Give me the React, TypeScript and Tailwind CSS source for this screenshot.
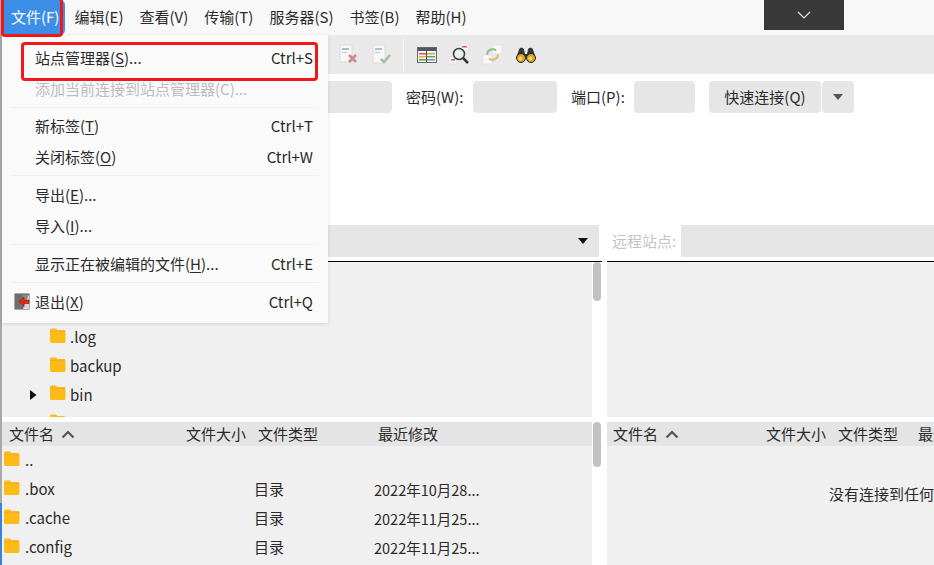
import React from "react";

const font = { fontFamily: '"Noto Sans CJK SC", "Noto Sans", sans-serif' };

const topMenus = ["编辑(E)", "查看(V)", "传输(T)", "服务器(S)", "书签(B)", "帮助(H)"];

const Folder = ({ className = "" }: { className?: string }) => (
  <svg width="16" height="16" viewBox="0 0 16 16" className={`shrink-0 ${className}`}>
    <path d="M0 2C0 1 .7.500 1.500.500h4.600l1.400 1.500h6.500c.9 0 1.500.6 1.500 1.500v10c0 .9-.6 1.500-1.500 1.500h-12C.7 15 0 14.400 0 13.500z" fill="#fdbb18" />
    <path d="M0 3h15v.6H0z" fill="#e2a73a" />
  </svg>
);

const ChevronUp = () => (
  <svg width="14" height="9" viewBox="0 0 14 9">
    <path d="M1.500 7.500L7 2l5.500 5.500" fill="none" stroke="#555" strokeWidth="2.200" />
  </svg>
);

const Caret = ({ color = "#111" }: { color?: string }) => (
  <svg width="10" height="6" viewBox="0 0 10 6">
    <path d="M0 0h10L5 6z" fill={color} />
  </svg>
);

const MenuItem = ({
  label,
  mnemonic,
  after,
  shortcut,
  disabled,
  icon,
}: {
  label: string;
  mnemonic?: string;
  after?: string;
  shortcut?: string;
  disabled?: boolean;
  icon?: React.ReactNode;
}) => (
  <div className={`relative flex h-[31px] items-center justify-between pl-[33px] pr-[15px] text-[15px] ${disabled ? "text-[#bdbdbd]" : "text-[#2a2a2a]"}`}>
    {icon}
    <span>
      {label}
      {mnemonic && <u className="underline-offset-2">{mnemonic}</u>}
      {after}
    </span>
    {shortcut && <span>{shortcut}</span>}
  </div>
);

const MenuSep = ({ short }: { short?: boolean }) => (
  <div className={`px-[9px] pt-[2px] ${short ? "h-[6px]" : "h-[7px]"}`}>
    <div className="h-px w-full bg-[#efefef]" />
  </div>
);

const ExitIcon = () => (
  <svg width="17" height="17" viewBox="0 0 17 17" className="absolute left-[12px] top-[6px]">
    <rect x="1" y="1" width="14" height="15" fill="#8a8a8a" stroke="#555" />
    <path d="M1 1h8v15H1z" fill="#6f6f6f" />
    <path d="M15 1v15H9z" fill="#d8d8d8" />
    <path d="M5 8.500L10 4v3h5v3.500h-5v3z" fill="#e02a12" stroke="#9c1a08" strokeWidth=".6" />
  </svg>
);

const DocX = () => (
  <svg width="22" height="22" viewBox="0 0 22 22">
    <path d="M2 1h12v17H2z" fill="#f7f7f7" stroke="#dcdcdc" />
    <path d="M4 4h7v2H4z" fill="#a9bfd4" />
    <path d="M4 8h5v1H4z" fill="#c9c9c9" />
    <path d="M11 11l7 7m0-7l-7 7" stroke="#c98a8a" strokeWidth="2.500" />
  </svg>
);

const DocCheck = () => (
  <svg width="22" height="22" viewBox="0 0 22 22">
    <path d="M2 1h12v18H2z" fill="#f7f7f7" stroke="#dcdcdc" />
    <path d="M4 4h7v2H4z" fill="#a9bfd4" />
    <path d="M4 8h5v1H4z" fill="#c9c9c9" />
    <path d="M10 15l3 3 6-7" fill="none" stroke="#9cc29c" strokeWidth="2.500" />
  </svg>
);

const TableIcon = () => (
  <svg width="20" height="16" viewBox="0 0 20 16">
    <rect x=".5" y=".5" width="19" height="15" fill="#f6f6f6" stroke="#666" />
    <path d="M1 1h18v3H1z" fill="#4d5a66" />
    <path d="M2 6h7v1.500H2z" fill="#d9534a" />
    <path d="M2 9h7v1.500H2z" fill="#e3b23c" />
    <path d="M2 12h7v1.500H2z" fill="#4da64d" />
    <path d="M10 6h8v1.500h-8z" fill="#e3a03c" />
    <path d="M10 9h8v1.500h-8z" fill="#5aa85a" />
    <path d="M10 12h8v1.500h-8z" fill="#6a8fc0" />
    <path d="M9.500 4v11" stroke="#555" />
  </svg>
);

const SearchIcon = () => (
  <svg width="21" height="21" viewBox="0 0 21 21">
    <path d="M11 0h9v7h-9z" fill="#fafafa" stroke="#ddd" />
    <path d="M13 2h5v1.500h-5z" fill="#d9534a" />
    <path d="M0 13h8v7H0z" fill="#fafafa" stroke="#ddd" />
    <path d="M2 15h4v1.500H2z" fill="#d9534a" />
    <circle cx="10" cy="10" r="5.500" fill="#eef3f5" fillOpacity=".5" stroke="#3a3a3a" strokeWidth="1.500" />
    <path d="M14 14l5 5" stroke="#333" strokeWidth="2.500" />
  </svg>
);

const SyncIcon = () => (
  <svg width="21" height="21" viewBox="0 0 21 21">
    <path d="M10 1h10v9H10z" fill="#f8f8f8" stroke="#e2e2e2" />
    <path d="M1 11h9v9H1z" fill="#f8f8f8" stroke="#e2e2e2" />
    <path d="M5 10.500a5.500 5.500 0 0 1 9-4" fill="none" stroke="#8fc08f" strokeWidth="2.200" />
    <path d="M16 10.500a5.500 5.500 0 0 1-9 4" fill="none" stroke="#dcc06a" strokeWidth="2.200" />
  </svg>
);

const Binoculars = () => (
  <svg width="20" height="17" viewBox="0 0 20 17">
    <path d="M3 3.500C3.500 1 7.500 1 8 3.500L9 8h2l1-4.500C12.500 1 16.500 1 17 3.500L19.500 11h-19z" fill="#33363a" />
    <circle cx="5" cy="12" r="4.500" fill="#d9a521" stroke="#222" />
    <circle cx="15" cy="12" r="4.500" fill="#d9a521" stroke="#222" />
    <circle cx="4.500" cy="12.500" r="2" fill="#f3d674" />
    <circle cx="14.500" cy="12.500" r="2" fill="#f3d674" />
  </svg>
);

const TreeRow = ({ name, arrow }: { name: string; arrow?: boolean }) => (
  <div className="flex h-[28.800px] shrink-0 items-center pl-[28px]">
    <div className="flex w-[20px] justify-start">
      {arrow && (
        <svg width="7" height="10" viewBox="0 0 7 10">
          <path d="M0 0l6.500 5L0 10z" fill="#111" />
        </svg>
      )}
    </div>
    <Folder className="-mt-[3px]" />
    <span className="ml-[4px] text-[#2a2a2a]">{name}</span>
  </div>
);

const fileRows = [
  { name: "..", type: "", date: "" },
  { name: ".box", type: "目录", date: "2022年10月28..." },
  { name: ".cache", type: "目录", date: "2022年11月25..." },
  { name: ".config", type: "目录", date: "2022年11月25..." },
];

const App = () => {
  return (
    <div style={font} className="relative flex h-[565px] w-[934px] overflow-hidden bg-white text-[15px] text-[#2a2a2a]">
      {/* sliver of the window behind */}
      <div className="flex w-[2px] shrink-0 flex-col bg-[#a9a9a9]">
        <div className="flex-1" />
        <div className="h-[62px] bg-[#3b82d8]" />
      </div>

      <div className="flex min-w-0 flex-1 flex-col">
        {/* menu bar */}
        <div className="flex h-[35px] shrink-0 items-center bg-[#f8f8f8]">
          <div className="flex h-full w-[63px] items-center rounded-r-[5px] bg-[#3d8ee6] pl-[9px] text-white">文件(F)</div>
          <div className="flex h-full items-center gap-[16px] pl-[9.500px]">
            {topMenus.map((m) => (
              <span key={m}>{m}</span>
            ))}
          </div>
        </div>

        {/* toolbar */}
        <div className="flex h-[39px] shrink-0 items-center bg-[#e9e9e9] pl-[330px]">
          <div className="flex w-[33px] justify-center"><DocX /></div>
          <div className="flex w-[33px] justify-center"><DocCheck /></div>
          <div className="ml-[5px] mr-[6px] h-[32px] w-px bg-[#f8f8f8]" />
          <div className="flex w-[33px] justify-center"><TableIcon /></div>
          <div className="flex w-[33px] justify-center"><SearchIcon /></div>
          <div className="flex w-[33px] justify-center"><SyncIcon /></div>
          <div className="flex w-[33px] justify-center"><Binoculars /></div>
        </div>

        {/* quick connect */}
        <div className="flex h-[151px] shrink-0 items-start bg-white pl-[298px] pt-[7px]">
          <div className="h-[32px] w-[92px] rounded-[4px] bg-[#e6e6e6]" />
          <span className="ml-[14px] flex h-[32px] w-[57px] items-center whitespace-nowrap">密码(W):</span>
          <div className="ml-[10px] h-[32px] w-[84px] rounded-[4px] bg-[#e6e6e6]" />
          <span className="ml-[14px] flex h-[32px] w-[53px] items-center whitespace-nowrap">端口(P):</span>
          <div className="ml-[10px] h-[32px] w-[61px] rounded-[4px] bg-[#e6e6e6]" />
          <div className="ml-[14px] flex h-[32px] w-[112px] items-center justify-center rounded-[4px] bg-[#e6e6e6]">快速连接(Q)</div>
          <div className="ml-px flex h-[32px] w-[32px] items-center justify-center rounded-[4px] bg-[#e6e6e6]">
            <Caret color="#555" />
          </div>
        </div>

        {/* site rows */}
        <div className="flex h-[37px] shrink-0">
          <div className="flex h-full w-[600px] shrink-0 flex-col justify-between border-b border-black">
            <div className="flex h-[32px] w-[597px] items-center justify-end bg-[#e6e6e6] pr-[11px]">
              <Caret />
            </div>
          </div>
          <div className="ml-[5px] flex h-full flex-1 flex-col border-b border-black">
            <div className="flex h-[32px]">
              <span className="flex w-[74px] items-center pl-[5px] text-[#c4c4c4]">远程站点:</span>
              <div className="flex-1 bg-[#e6e6e6]" />
            </div>
          </div>
        </div>

        {/* tree panes */}
        <div className="flex h-[155px] shrink-0 overflow-hidden">
          <div className="flex w-[590px] shrink-0 flex-col overflow-hidden bg-[#f0f0f0] pt-[61px]">
            <TreeRow name=".log" />
            <TreeRow name="backup" />
            <TreeRow name="bin" arrow />
            <TreeRow name="" />
          </div>
          <div className="ml-px h-[39px] w-[8px] rounded-[4px] bg-[#c2c2c2]" />
          <div className="ml-[6px] flex-1 bg-[#f0f0f0]" />
        </div>

        <div className="h-[5px] shrink-0" />

        {/* list panes */}
        <div className="flex min-h-0 flex-1">
          <div className="flex w-[590px] shrink-0 flex-col bg-[#f0f0f0]">
            <div className="flex h-[24px] shrink-0 items-center bg-[#e4e4e4] pl-[7px]">
              <div className="flex w-[177px] items-center gap-[7px]">
                <span>文件名</span>
                <ChevronUp />
              </div>
              <span className="w-[72px]">文件大小</span>
              <span className="w-[120px]">文件类型</span>
              <span>最近修改</span>
            </div>
            {fileRows.map((r) => (
              <div key={r.name} className="flex h-[29px] shrink-0 items-center pl-[2px]">
                <div className="flex w-[250px] items-center">
                  <Folder className="-mt-[3px]" />
                  <span className="ml-[5px]">{r.name}</span>
                </div>
                <span className="w-[120px]">{r.type}</span>
                <span className="text-[14.500px]">{r.date}</span>
              </div>
            ))}
          </div>
          <div className="ml-px h-[45px] w-[8px] rounded-[4px] bg-[#c2c2c2]" />
          <div className="ml-[6px] flex min-w-0 flex-1 flex-col overflow-hidden bg-[#f0f0f0]">
            <div className="flex h-[24px] shrink-0 items-center whitespace-nowrap bg-[#e4e4e4] pl-[6px]">
              <div className="flex w-[153px] shrink-0 items-center gap-[7px]">
                <span>文件名</span>
                <ChevronUp />
              </div>
              <span className="w-[72px] shrink-0">文件大小</span>
              <span className="w-[80px] shrink-0">文件类型</span>
              <span>最近修改</span>
            </div>
            <div className="whitespace-nowrap pl-[222px] pt-[37px]">没有连接到任何服务器</div>
          </div>
        </div>
      </div>

      {/* open file menu */}
      <div className="absolute left-[2px] top-[35px] w-[326px] bg-[#fafafa] pb-[5px] pt-[8px] shadow-[0_1px_4px_rgba(0,0,0,0.12)]">
        <MenuItem label="站点管理器(" mnemonic="S" after=")..." shortcut="Ctrl+S" />
        <MenuItem label="添加当前连接到站点管理器(C)..." disabled />
        <MenuSep short />
        <MenuItem label="新标签(" mnemonic="T" after=")" shortcut="Ctrl+T" />
        <MenuItem label="关闭标签(" mnemonic="O" after=")" shortcut="Ctrl+W" />
        <MenuSep />
        <MenuItem label="导出(" mnemonic="E" after=")..." />
        <MenuItem label="导入(" mnemonic="I" after=")..." />
        <MenuSep />
        <MenuItem label="显示正在被编辑的文件(" mnemonic="H" after=")..." shortcut="Ctrl+E" />
        <MenuSep />
        <MenuItem label="退出(" mnemonic="X" after=")" shortcut="Ctrl+Q" icon={<ExitIcon />} />
      </div>

      {/* annotation boxes */}
      <div className="absolute left-[1px] top-[-4px] h-[41px] w-[62px] rounded-[4px] border-[3px] border-[#f01818]" />
      <div className="absolute left-[21px] top-[42px] h-[39px] w-[297px] rounded-[4px] border-[3px] border-[#f01818]" />

      {/* dark tab from the capture tool */}
      <div className="absolute left-[764px] top-0 flex h-[30px] w-[80px] items-center justify-center bg-[#393939]">
        <svg width="14" height="8" viewBox="0 0 14 8">
          <path d="M1 1l6 6 6-6" fill="none" stroke="#e6e6e6" strokeWidth="1.200" />
        </svg>
      </div>
    </div>
  );
};

export default App;
